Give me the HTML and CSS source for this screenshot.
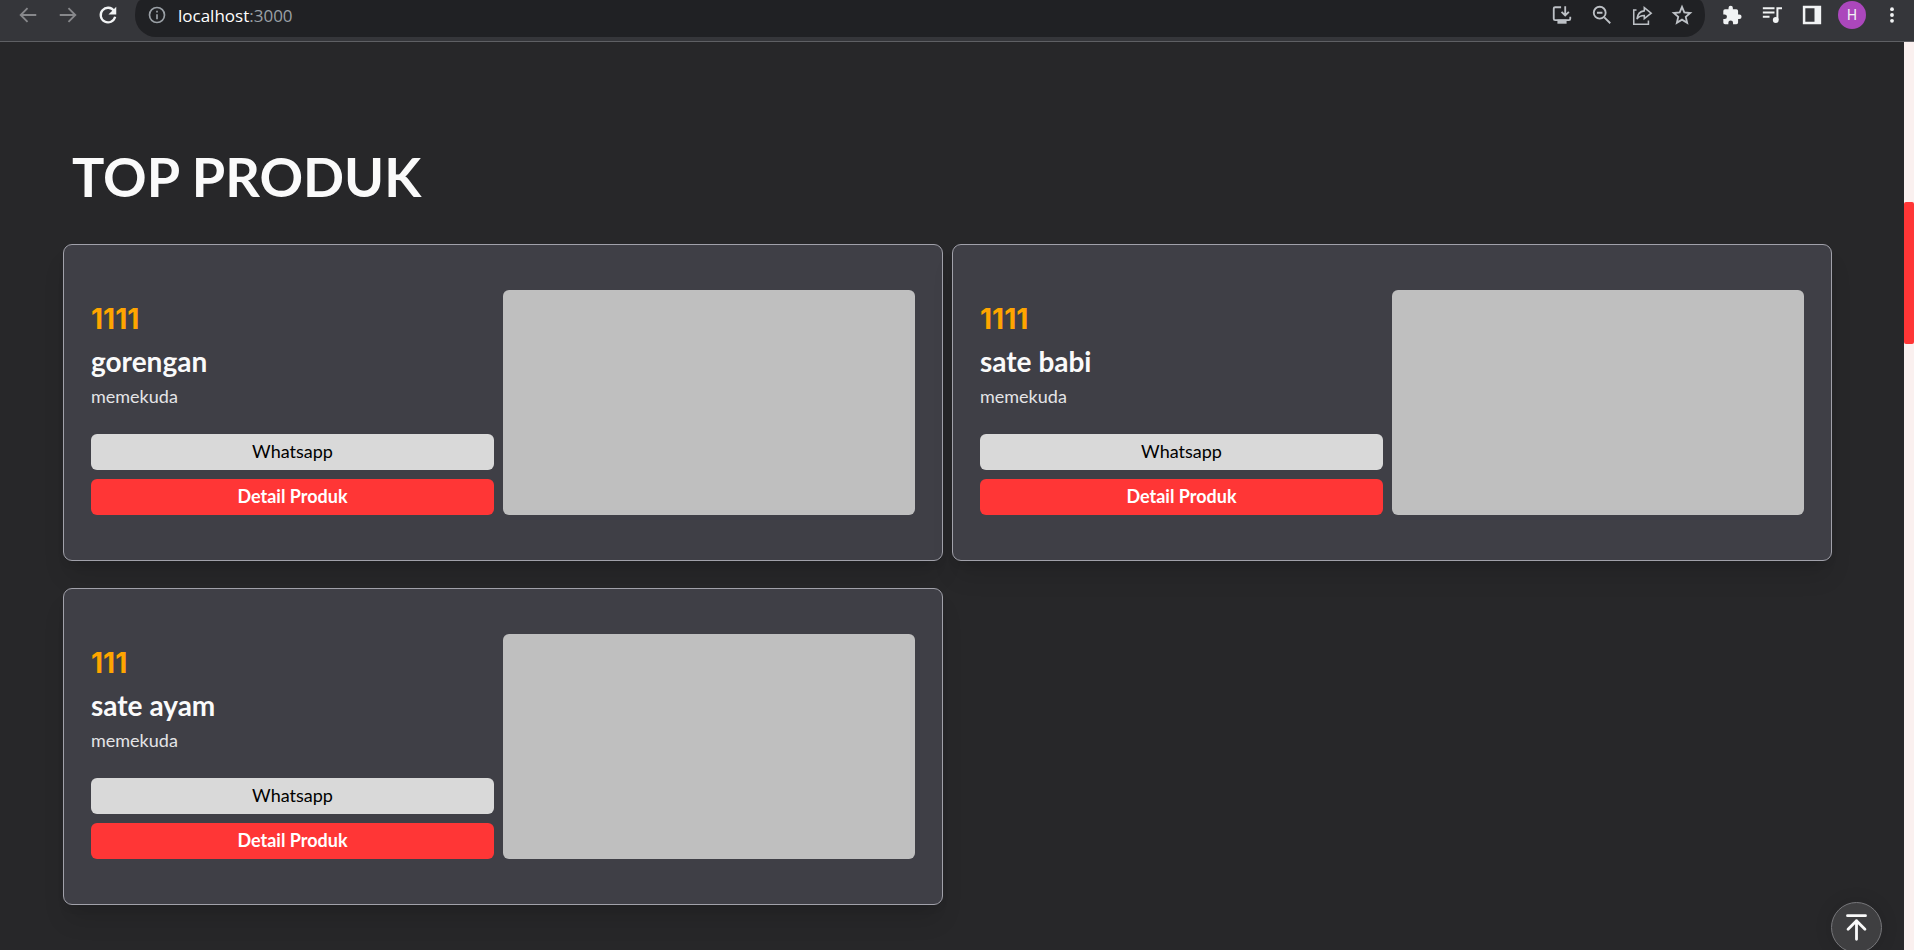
FILE: index.html
```html
<!DOCTYPE html>
<html lang="id">
<head>
<meta charset="utf-8">
<title>Top Produk</title>
<link rel="stylesheet" href="styles.css">
</head>
<body>
<header class="toolbar">
  <nav class="nav-buttons">
    <button class="icon-button muted" aria-label="Back"><svg viewBox="0 0 24 24"><path d="M21 12H4M11.500 4.500L4 12l7.500 7.500"/></svg></button>
    <button class="icon-button muted" aria-label="Forward"><svg viewBox="0 0 24 24"><path d="M3 12h17M12.500 4.500L20 12l-7.500 7.500"/></svg></button>
    <button class="icon-button" aria-label="Reload"><svg viewBox="0 0 24 24"><path stroke-width="2.500" d="M18.600 7.500A8 8 0 1 0 19.800 14"/><path class="solid" d="M21 3v8.500h-8.500z"/></svg></button>
  </nav>
  <div class="address-bar">
    <button class="icon-button info" aria-label="Site information"><svg viewBox="0 0 24 24"><circle cx="12" cy="12" r="9"/><path d="M12 11v6M12 7v2"/></svg></button>
    <p class="address">localhost<span class="port">:3000</span></p>
    <button class="icon-button soft" aria-label="Install app"><svg viewBox="0 0 24 24"><path d="M11 3.500H4.500a1.500 1.500 0 0 0-1.500 1.500v11a1.500 1.500 0 0 0 1.500 1.500h15a1.500 1.500 0 0 0 1.500-1.500v-2M15.500 2.500v9M11.500 8.500l4 4 4-4"/><path class="solid" d="M7 17h10v4.500H7z"/></svg></button>
    <button class="icon-button soft" aria-label="Zoom out"><svg viewBox="0 0 24 24"><circle cx="9.500" cy="9.500" r="6.500"/><path d="M14.500 14.500l6.500 6.500M6.500 9.500h6"/></svg></button>
    <button class="icon-button soft" aria-label="Share"><svg viewBox="0 0 24 24"><path stroke-width="1.700" d="M6 6.500H3V22h16v-4M14.500 4l7.500 6-7.500 6v-3.500c-4 0-6 1-8 4 .500-5 3-8.500 8-9z"/></svg></button>
    <button class="icon-button soft" aria-label="Bookmark"><svg viewBox="0 0 24 24"><path d="M12 3.200l2.500 6 6.500.6-4.900 4.300 1.500 6.400-5.600-3.400-5.600 3.400 1.500-6.400L3 9.800l6.500-.6z"/></svg></button>
  </div>
  <div class="tools">
    <button class="icon-button" aria-label="Extensions"><svg viewBox="1 0 22 23"><path class="solid" d="M20.500 11H19V7a2 2 0 0 0-2-2h-4V3.500a2.500 2.500 0 0 0-5 0V5H4a2 2 0 0 0-2 2v3.800h1.500a2.700 2.700 0 0 1 0 5.400H2V20a2 2 0 0 0 2 2h3.800v-1.500a2.700 2.700 0 0 1 5.400 0V22H17a2 2 0 0 0 2-2v-4h1.500a2.500 2.500 0 0 0 0-5z"/></svg></button>
    <button class="icon-button" aria-label="Media"><svg viewBox="0 0 24 24"><path stroke-width="2.400" d="M1 4h14M1 9h14M1 14h8M18.500 18V4H24"/><circle class="solid" cx="16.500" cy="18" r="3.500"/></svg></button>
    <button class="icon-button" aria-label="Side panel"><svg viewBox="0 0 24 24"><path class="solid" fill-rule="evenodd" d="M1 1h22v22H1zM4 4v16h11V4z"/></svg></button>
    <button class="avatar" aria-label="Profile H">H</button>
    <button class="icon-button" aria-label="Menu"><svg viewBox="0 0 24 24"><circle class="solid" cx="12" cy="5" r="2.300"/><circle class="solid" cx="12" cy="12" r="2.300"/><circle class="solid" cx="12" cy="19" r="2.300"/></svg></button>
  </div>
</header>
<div class="viewport">
  <main class="page">
    <h1 class="title">TOP PRODUK</h1>
    <section class="products">
      <article class="card">
        <div class="details">
          <p class="price">1111</p>
          <h2 class="name">gorengan</h2>
          <p class="description">memekuda</p>
          <div class="actions"><button class="button">Whatsapp</button><button class="button primary">Detail Produk</button></div>
        </div>
        <div class="photo"></div>
      </article>
      <article class="card">
        <div class="details">
          <p class="price">1111</p>
          <h2 class="name">sate babi</h2>
          <p class="description">memekuda</p>
          <div class="actions"><button class="button">Whatsapp</button><button class="button primary">Detail Produk</button></div>
        </div>
        <div class="photo"></div>
      </article>
      <article class="card">
        <div class="details">
          <p class="price">111</p>
          <h2 class="name">sate ayam</h2>
          <p class="description">memekuda</p>
          <div class="actions"><button class="button">Whatsapp</button><button class="button primary">Detail Produk</button></div>
        </div>
        <div class="photo"></div>
      </article>
    </section>
    <button class="to-top" aria-label="Back to top"><svg viewBox="0 0 24 24"><path d="M4 1.500h16M12 22.500V6M4.500 13.500L12 6l7.500 7.500"/></svg></button>
  </main>
  <div class="scroll-track"><div class="scroll-thumb"></div></div>
</div>
</body>
</html>
```
FILE: styles.css
```css
* { box-sizing: border-box; }

body {
  margin: 0;
  height: 100vh;
  display: flex;
  flex-direction: column;
  overflow: hidden;
  background: #272729;
  color: #fafafa;
  font-family: Lato, "Liberation Sans", sans-serif;
}

h1, h2, p { margin: 0; }

button {
  border: 0;
  padding: 0;
  font: inherit;
  color: inherit;
  background: none;
}

svg {
  display: block;
  width: 22px;
  height: 22px;
  fill: none;
  stroke: currentColor;
  stroke-width: 2;
}

.solid { fill: currentColor; stroke: none; }

.toolbar {
  flex: none;
  display: flex;
  height: 42px;
  padding: 0 2px 0 8px;
  background: #35363a;
  border-bottom: 1px solid #5f6064;
  color: #f1f3f4;
}

.nav-buttons, .tools { display: flex; height: 30px; align-items: center; }
.nav-buttons { padding-right: 7px; }
.tools { padding-left: 7px; }

.icon-button {
  flex: none;
  width: 40px;
  height: 30px;
  display: grid;
  place-items: center;
}

.tools svg, .info svg { width: 20px; height: 20px; }
.muted { color: #87888b; }
.soft { color: #bdc1c6; }
.info { color: #9aa0a6; width: 43px; }

.address-bar {
  flex: 1;
  display: flex;
  height: 37px;
  padding-right: 3px;
  border-radius: 6px 6px 21px 21px / 15px 15px 21px 21px;
  background: #202124;
}

.address {
  flex: 1;
  font: 17px/31px "Open Sans", "Noto Sans", sans-serif;
  color: #fff;
}

.port { color: #9aa0a6; }

.avatar {
  width: 28px;
  height: 28px;
  margin: 0 6px;
  border-radius: 50%;
  background: #ab47bc;
  font: 14px/28px Roboto, sans-serif;
}

.viewport { flex: 1; min-height: 0; display: flex; }

.page {
  position: relative;
  flex: 1;
  padding: 99px 72px 0 63px;
  overflow: hidden;
}

.title {
  padding-left: 9px;
  margin-bottom: 31px;
  font-size: 54px;
  line-height: 72px;
  font-weight: 700;
}

.products {
  display: grid;
  grid-template-columns: 1fr 1fr;
  gap: 27px 9px;
}

.card {
  display: grid;
  grid-template-columns: 403fr 412fr;
  gap: 9px;
  padding: 45px 27px;
  border: 1px solid #a1a1aa;
  border-radius: 9px;
  background: #3f3f46;
  box-shadow: 0 18px 24px -4px rgba(0, 0, 0, .12), 0 6px 9px -4px rgba(0, 0, 0, .1);
}

.details { display: flex; flex-direction: column; justify-content: flex-end; }

.price, .name { font-size: 28px; line-height: 36px; font-weight: 700; }
.price { color: orange; margin-bottom: 6px; font-family: Inter, Lato, sans-serif; }
.name { margin-bottom: 4px; }
.description { font-size: 18px; line-height: 27px; color: #e4e4e7; margin-bottom: 24px; }

.actions { display: grid; gap: 9px; }

.button {
  height: 36px;
  padding-bottom: 2px;
  border-radius: 6px;
  background: #d9d9d9;
  color: #000;
  font-size: 18px;
}

.primary { background: #ff3636; color: #fff; font-weight: 700; }

.photo { height: 225px; border-radius: 6px; background: #bfbfbf; }

.to-top {
  position: absolute;
  right: 22px;
  bottom: -3px;
  width: 51px;
  height: 51px;
  display: grid;
  place-items: center;
  border: 1px solid #77777b;
  border-radius: 50%;
  background: #3f3f41;
  box-shadow: 0 0 18px rgba(0, 0, 0, .12);
}

.to-top svg { width: 27px; height: 27px; stroke-width: 2.5; stroke-linecap: round; stroke-linejoin: round; }

.scroll-track { width: 10px; padding-top: 160px; background: #faf0ef; }
.scroll-thumb { height: 142px; border-radius: 2px; background: #ff3636; }
```
